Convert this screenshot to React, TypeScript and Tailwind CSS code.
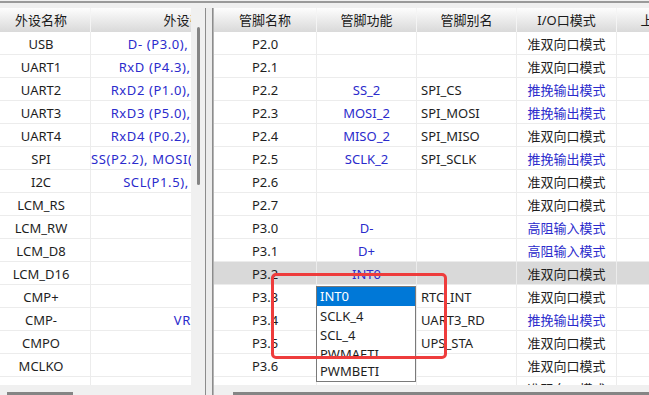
import React from "react";

const blue = "text-[#2b2bcc]";

const periph = [
  { name: "USB", pins: "D- (P3.0), D+ (P3.1)" },
  { name: "UART1", pins: "RxD (P4.3), TxD (P4.4)" },
  { name: "UART2", pins: "RxD2 (P1.0), TxD2 (P1.1)" },
  { name: "UART3", pins: "RxD3 (P5.0), TxD3 (P5.1)" },
  { name: "UART4", pins: "RxD4 (P0.2), TxD4 (P0.3)" },
  { name: "SPI", pins: "SS(P2.2), MOSI(P2.3), MISO(P2.4), SCLK(P2.5)" },
  { name: "I2C", pins: "SCL(P1.5), SDA(P1.4)" },
  { name: "LCM_RS", pins: "" },
  { name: "LCM_RW", pins: "" },
  { name: "LCM_D8", pins: "" },
  { name: "LCM_D16", pins: "" },
  { name: "CMP+", pins: "" },
  { name: "CMP-", pins: "VREF" },
  { name: "CMPO", pins: "" },
  { name: "MCLKO", pins: "" },
  { name: "", pins: "" },
];

const Q = "准双向口模式";
const T = "推挽输出模式";
const H = "高阻输入模式";

const pins = [
  { pin: "P2.0", fn: "", alias: "", mode: Q },
  { pin: "P2.1", fn: "", alias: "", mode: Q },
  { pin: "P2.2", fn: "SS_2", alias: "SPI_CS", mode: T },
  { pin: "P2.3", fn: "MOSI_2", alias: "SPI_MOSI", mode: T },
  { pin: "P2.4", fn: "MISO_2", alias: "SPI_MISO", mode: Q },
  { pin: "P2.5", fn: "SCLK_2", alias: "SPI_SCLK", mode: T },
  { pin: "P2.6", fn: "", alias: "", mode: Q },
  { pin: "P2.7", fn: "", alias: "", mode: Q },
  { pin: "P3.0", fn: "D-", alias: "", mode: H },
  { pin: "P3.1", fn: "D+", alias: "", mode: H },
  { pin: "P3.2", fn: "INT0", alias: "", mode: Q, selected: true },
  { pin: "P3.3", fn: "", alias: "RTC_INT", mode: Q },
  { pin: "P3.4", fn: "", alias: "UART3_RD", mode: T },
  { pin: "P3.5", fn: "", alias: "UPS_STA", mode: Q },
  { pin: "P3.6", fn: "", alias: "", mode: Q },
  { pin: "P3.7", fn: "", alias: "", mode: Q },
];

const headCell =
  "h-full shrink-0 flex items-center justify-center pt-[2px] border-r border-[#f4f4f4] bg-linear-to-b from-[#fdfdfd] to-[#d9d9d9] text-[#1a1a1a]";

const cell = "shrink-0 border-r border-[#ececec] flex items-center pt-[3px]";

export default function App() {
  return (
    <div className="relative w-[649px] h-[395px] overflow-hidden bg-[#f0f0f0] flex flex-col text-[13px] text-[#1e1e1e] font-['Noto_Sans','Noto_Sans_CJK_SC',sans-serif]">
      {/* top strip */}
      <div className="h-[8px] shrink-0 pt-px">
        <div className="h-[2px] bg-[#9a9a9a]" />
      </div>

      <div className="flex h-[387px]">
        {/* left panel */}
        <div className="w-[205px] shrink-0 flex flex-col">
          <div className="flex h-[377px]">
            <div className="w-[191px] overflow-hidden bg-white">
              <div className="flex h-[24px] w-[289px] whitespace-nowrap">
                <div className={`${headCell} w-[91px] pr-2`}>外设名称</div>
                <div className={`${headCell} w-[198px]`}>外设引脚</div>
              </div>
              {periph.map((p, i) => (
                <div key={i} className="flex h-[23px] w-[289px] border-b border-[#ececec] whitespace-nowrap">
                  <div className={`${cell} w-[91px] pr-2 justify-center`}>{p.name}</div>
                  <div
                    className={`w-[198px] shrink-0 overflow-hidden text-center pt-[2px] leading-[21px] tracking-[0.6px] ${blue}`}
                  >
                    {p.pins}
                  </div>
                </div>
              ))}
            </div>
            {/* vertical scrollbar */}
            <div className="w-[14px] bg-[#f0f0f0] pt-[19px] pl-[6px]">
              <div className="w-[3px] h-[158px] rounded-full bg-[#858585]" />
            </div>
          </div>
          <div className="h-[10px] pt-[7px] pl-[7px]">
            <div className="w-[66px] h-[3px] bg-[#858585]" />
          </div>
        </div>

        {/* splitter */}
        <div className="w-[8px] shrink-0 border-l border-r border-[#8c8c8c] bg-[#ececec]" />

        {/* right panel */}
        <div className="flex-1 min-w-0 flex flex-col border-l border-[#b4b4b4]">
          <div className="h-[377px] overflow-hidden bg-white">
            <div className="flex h-[24px] w-[503px] whitespace-nowrap">
              <div className={`${headCell} w-[103px]`}>管脚名称</div>
              <div className={`${headCell} w-[100px]`}>管脚功能</div>
              <div className={`${headCell} w-[100px]`}>管脚别名</div>
              <div className={`${headCell} w-[100px]`}>I/O口模式</div>
              <div className={`${headCell} w-[100px]`}>上拉电阻</div>
            </div>
            {pins.map((r) => (
              <div
                key={r.pin}
                className={`flex h-[23px] w-[503px] border-b border-[#ececec] whitespace-nowrap ${
                  r.selected ? "bg-[#d9d9d9]" : ""
                }`}
              >
                <div className={`${cell} w-[103px] justify-center`}>{r.pin}</div>
                <div className={`${cell} w-[100px] justify-center ${blue}`}>{r.fn}</div>
                <div className={`${cell} w-[100px] pl-[4px]`}>{r.alias}</div>
                <div className={`${cell} w-[100px] justify-center ${r.mode === Q ? "" : blue}`}>
                  {r.mode}
                </div>
                <div className={`${cell} w-[100px]`} />
              </div>
            ))}
          </div>
          <div className="h-[10px] pt-[7px] pl-[19px]">
            <div className="h-[3px] bg-[#858585]" />
          </div>
        </div>
      </div>

      {/* dropdown list */}
      <div className="absolute left-[316px] top-[286px] w-[100px] h-[96px] bg-white border border-[#7a7a7a] flex flex-col leading-[19px] whitespace-nowrap">
        <div className="h-[19px] shrink-0 bg-[#0078d7] text-white pl-[3px]">INT0</div>
        <div className="h-[20px] shrink-0 pl-[3px] pt-px">SCLK_4</div>
        <div className="h-[19px] shrink-0 pl-[3px]">SCL_4</div>
        <div className="h-[14px] shrink-0 pl-[3px] overflow-hidden">PWMAETI</div>
        <div className="h-[22px] shrink-0 pl-[3px] pt-[3px]">PWMBETI</div>
      </div>

      {/* red annotation */}
      <div className="absolute left-[271px] top-[273px] w-[176px] h-[86px] border-[3px] border-[#ee3c3c] rounded-[5px]" />
    </div>
  );
}
